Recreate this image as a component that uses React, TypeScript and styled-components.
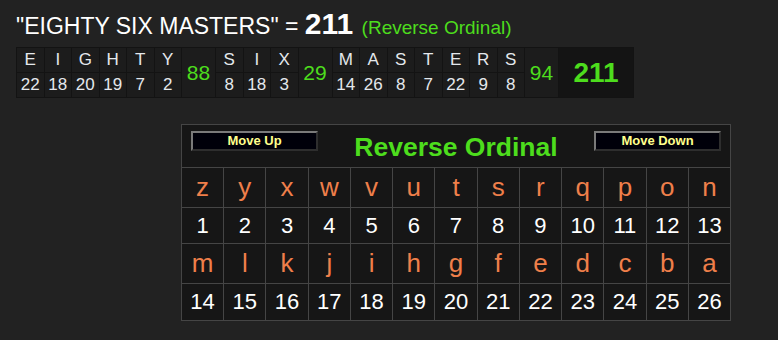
import React from "react";
import styled, { createGlobalStyle } from "styled-components";

const Global = createGlobalStyle`
  html, body { margin: 0; padding: 0; background: #222222; }
  body { font-family: "Liberation Sans", Arial, sans-serif; }
`;

const GREEN = "#4ddd1d";
const ORANGE = "#ef7f4a";

const Page = styled.div`
  padding: 9px 16px 0 16px;
`;

const Title = styled.div`
  height: 30px;
  line-height: 26px;
  font-size: 23px;
  color: #ffffff;
  white-space: nowrap;
`;

const TitleTotal = styled.span`
  font-size: 30px;
  font-weight: bold;
  line-height: 1;
`;

const TitleCipher = styled.span`
  font-size: 19px;
  color: ${GREEN};
  margin-left: 2px;
`;

const Breakdown = styled.div`
  display: inline-flex;
  margin-top: 8px;
  padding: 1px;
  gap: 1px;
  background: #131313;
`;

const Word = styled.div<{ $n: number }>`
  display: grid;
  grid-template-columns: repeat(${(p) => p.$n}, 26.5px);
  grid-template-rows: 24px 24px;
  gap: 1px;
`;

const Cell = styled.div`
  display: flex;
  align-items: center;
  justify-content: center;
  background: #1c1c1c;
  color: #e4e8ec;
  font-size: 17px;
`;

const WordSum = styled.div`
  width: 33px;
  display: flex;
  align-items: center;
  justify-content: center;
  background: #1c1c1c;
  color: ${GREEN};
  font-size: 21px;
`;

const GrandTotal = styled.div`
  width: 74px;
  display: flex;
  align-items: center;
  justify-content: center;
  background: #141414;
  color: ${GREEN};
  font-size: 28px;
  font-weight: bold;
`;

const Cipher = styled.div`
  margin: 26px 0 0 165px;
  width: 550px;
  box-sizing: border-box;
  display: grid;
  grid-template-columns: repeat(13, 1fr);
  grid-template-rows: 42px 39px 35px 39px 36px;
  gap: 1px;
  padding: 1px;
  background: #454545;
`;

const Header = styled.div`
  grid-column: 1 / -1;
  display: flex;
  justify-content: space-between;
  align-items: flex-start;
  padding: 6px 9px 0 9px;
  background: #161616;
`;

const MoveButton = styled.button`
  width: 127px;
  height: 20px;
  box-sizing: border-box;
  padding: 0;
  background: #00000a;
  border-style: solid;
  border-width: 2px;
  border-color: #7a7a7a #2e2e2e #2e2e2e #7a7a7a;
  color: #ffff8c;
  font-family: "Liberation Sans", Arial, sans-serif;
  font-size: 13px;
  font-weight: bold;
  line-height: 16px;
  cursor: pointer;
`;

const CipherName = styled.div`
  margin-top: 3px;
  font-size: 26.5px;
  line-height: 26px;
  font-weight: bold;
  color: ${GREEN};
`;

const LetterCell = styled.div`
  display: flex;
  align-items: center;
  justify-content: center;
  background: #161616;
  color: ${ORANGE};
  font-size: 26px;
`;

const ValueCell = styled.div`
  display: flex;
  align-items: center;
  justify-content: center;
  background: #161616;
  color: #ffffff;
  font-size: 22px;
`;

const words: { letters: string; values: number[] }[] = [
  { letters: "EIGHTY", values: [22, 18, 20, 19, 7, 2] },
  { letters: "SIX", values: [8, 18, 3] },
  { letters: "MASTERS", values: [14, 26, 8, 7, 22, 9, 8] },
];

const alphabet = "zyxwvutsrqponmlkjihgfedcba".split("");

export default function App() {
  const total = words.reduce((s, w) => s + w.values.reduce((a, b) => a + b, 0), 0);
  const rows = [alphabet.slice(0, 13), alphabet.slice(13)];
  return (
    <>
      <Global />
      <Page>
        <Title>
          "EIGHTY SIX MASTERS" = <TitleTotal>{total}</TitleTotal>{" "}
          <TitleCipher>(Reverse Ordinal)</TitleCipher>
        </Title>
        <Breakdown>
          {words.map((w) => (
            <React.Fragment key={w.letters}>
              <Word $n={w.letters.length}>
                {w.letters.split("").map((l, i) => (
                  <Cell key={"l" + i}>{l}</Cell>
                ))}
                {w.values.map((v, i) => (
                  <Cell key={"v" + i}>{v}</Cell>
                ))}
              </Word>
              <WordSum>{w.values.reduce((a, b) => a + b, 0)}</WordSum>
            </React.Fragment>
          ))}
          <GrandTotal>{total}</GrandTotal>
        </Breakdown>
        <Cipher>
          <Header>
            <MoveButton>Move Up</MoveButton>
            <CipherName>Reverse Ordinal</CipherName>
            <MoveButton>Move Down</MoveButton>
          </Header>
          {rows.map((row, r) => (
            <React.Fragment key={r}>
              {row.map((l) => (
                <LetterCell key={l}>{l}</LetterCell>
              ))}
              {row.map((l, i) => (
                <ValueCell key={l + "v"}>{r * 13 + i + 1}</ValueCell>
              ))}
            </React.Fragment>
          ))}
        </Cipher>
      </Page>
    </>
  );
}
